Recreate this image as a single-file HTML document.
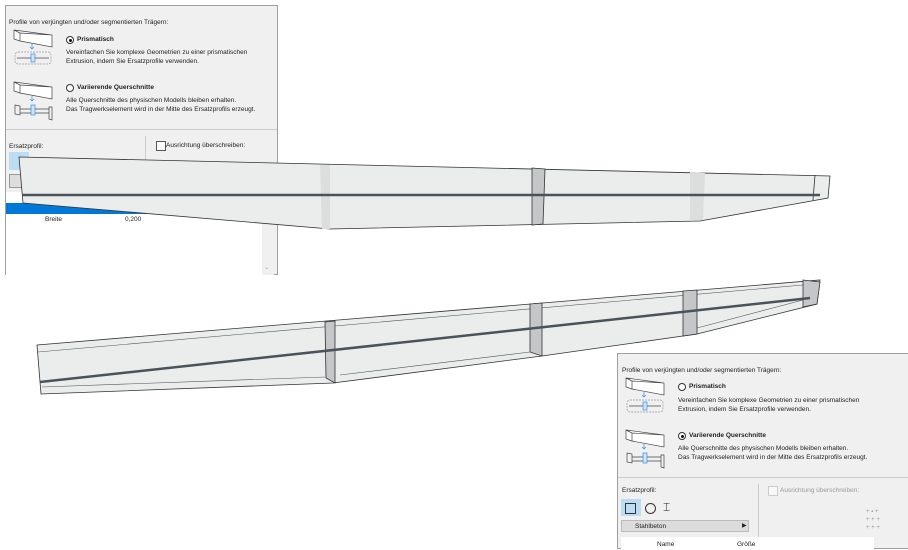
<!DOCTYPE html>
<html><head><meta charset="utf-8"><style>
body{margin:0;width:908px;height:548px;background:#fff;position:relative;overflow:hidden;font-family:"Liberation Sans",sans-serif;font-size:6.5px;color:#222}
.p{position:absolute;background:#f0f0f0;border:1px solid #a0a0a0;box-sizing:border-box}
.t{position:absolute;white-space:nowrap}
.b{font-weight:bold}
.rad{position:absolute;width:8px;height:8px;border:1px solid #333;border-radius:50%;background:#fff;box-sizing:border-box}
.rad.on::after{content:"";position:absolute;left:1.5px;top:1.5px;width:3px;height:3px;border-radius:50%;background:#111}
svg{position:absolute}
</style></head><body>

<!-- top-left panel -->
<div class="p" style="left:5px;top:5px;width:273px;height:270px">
  <div class="t" style="left:3px;top:13px">Profile von verjüngten und/oder segmentierten Trägern:</div>
  <div class="rad on" style="left:60px;top:30px"></div>
  <div class="t b" style="left:71px;top:30px">Prismatisch</div>
  <div class="t" style="left:60px;top:43px">Vereinfachen Sie komplexe Geometrien zu einer prismatischen</div>
  <div class="t" style="left:60px;top:52px">Extrusion, indem Sie Ersatzprofile verwenden.</div>
  <div class="rad" style="left:60px;top:78px"></div>
  <div class="t b" style="left:71px;top:78px">Variierende Querschnitte</div>
  <div class="t" style="left:60px;top:91px">Alle Querschnitte des physischen Modells bleiben erhalten.</div>
  <div class="t" style="left:60px;top:100px">Das Tragwerkselement wird in der Mitte des Ersatzprofils erzeugt.</div>
  <div style="position:absolute;left:0;right:0;top:123px;border-top:1px solid #ccc"></div>
  <div style="position:absolute;left:139px;top:130px;height:60px;border-left:1px solid #ccc"></div>
  <div class="t" style="left:3px;top:137px">Ersatzprofil:</div>
  <div style="position:absolute;left:150px;top:135px;width:8px;height:8px;border:1px solid #555;background:#fff"></div>
  <div class="t" style="left:160px;top:136px">Ausrichtung überschreiben:</div>
  <div style="position:absolute;left:3px;top:146px;width:20px;height:18px;background:#bcdcf4"></div>
  <div style="position:absolute;left:3px;top:168px;width:16px;height:12px;background:#ddd;border:1px solid #999"></div>
  <div style="position:absolute;left:0;top:186px;width:262px;height:83px;background:#fff"></div>
  <div style="position:absolute;left:0;top:197px;width:262px;height:11px;background:#0078d7"></div>
  <div class="t" style="left:39px;top:210px">Breite</div>
  <div class="t" style="left:119px;top:210px">0,200</div>
  <div style="position:absolute;left:256px;top:186px;width:12px;height:83px;background:#f0f0f0"></div>
  <div class="t" style="left:258px;top:257px;color:#999">⌄</div>
</div>
<svg style="left:12px;top:27px" width="44" height="95" viewBox="0 0 44 95" fill="none" stroke="#444" stroke-width=".7">
  <path d="M2 3 L40 8 L40 20 L8 14 L2 12 Z M2 3 L8 6 L8 14 M8 6 L40 8" fill="#fff"/>
  <path d="M20 17 V22 M18 20 L20 22 L22 20" stroke="#3a8ee6"/>
  <rect x="3" y="25" width="36" height="12" rx="3" stroke="#999" stroke-dasharray="2 1"/>
  <path d="M5 31 H37"/><rect x="19" y="27" width="4" height="8" stroke="#3a8ee6" fill="#cfe4f9"/>
  <path d="M2 55 L40 60 L40 72 L8 66 L2 64 Z M2 55 L8 58 L8 66 M8 58 L40 60" fill="#fff"/>
  <path d="M20 69 V74 M18 72 L20 74 L22 72" stroke="#3a8ee6"/>
  <path d="M3 78 L8 79 L8 88 L3 87 Z M37 80 L40 80 L40 93 L37 92 Z M8 82 H37 M8 86 H37"/>
  <rect x="19" y="78" width="4" height="10" stroke="#3a8ee6" fill="#cfe4f9"/>
</svg>

<!-- beams -->
<svg style="left:0;top:0" width="908" height="548" viewBox="0 0 908 548" stroke="#333" stroke-width=".8">
  <polygon points="19,157 830,176 828,198 700,221 330,229 23,203" fill="#ebecec"/>
  <polygon points="320,165 330,165 330,229 322,229" fill="#dcdddd" stroke="none"/>
  <polygon points="690,172 705,173 703,220 690,221" fill="#dcdddd" stroke="none"/>
  <polygon points="532,168 545,169 543,224 532,225" fill="#c4c6c8"/>
  <path d="M815,175 L813,200" fill="none"/>
  <path d="M22,195 L820,195" stroke="#4a525a" stroke-width="2.5"/>
  <polygon points="37,345 820,280 817,304 697,334 542,356 333,383 41,394" fill="#ebecec"/>
  <path d="M38,352 L803,285 M42,387 L325,377 M340,375 L530,352 M697,328 L803,300" fill="none" stroke="#555" stroke-width=".6"/>
  <polygon points="325,322 335,321 335,383 326,378" fill="#c4c6c8"/>
  <polygon points="530,304 542,303 542,356 530,352" fill="#c4c6c8"/>
  <polygon points="683,291 697,290 697,334 683,336" fill="#c4c6c8"/>
  <polygon points="803,280 820,282 817,304 803,307" fill="#c4c6c8"/>
  <path d="M40,382 L810,298" stroke="#4a525a" stroke-width="2.5"/>
</svg>

<!-- bottom-right panel -->
<div class="p" style="left:617px;top:353px;width:292px;height:196px">
  <div class="t" style="left:4px;top:13px">Profile von verjüngten und/oder segmentierten Trägern:</div>
  <div class="rad" style="left:60px;top:29px"></div>
  <div class="t b" style="left:71px;top:29px">Prismatisch</div>
  <div class="t" style="left:60px;top:43px">Vereinfachen Sie komplexe Geometrien zu einer prismatischen</div>
  <div class="t" style="left:60px;top:52px">Extrusion, indem Sie Ersatzprofile verwenden.</div>
  <div class="rad on" style="left:60px;top:78px"></div>
  <div class="t b" style="left:71px;top:78px">Variierende Querschnitte</div>
  <div class="t" style="left:60px;top:91px">Alle Querschnitte des physischen Modells bleiben erhalten.</div>
  <div class="t" style="left:60px;top:100px">Das Tragwerkselement wird in der Mitte des Ersatzprofils erzeugt.</div>
  <div style="position:absolute;left:0;right:0;top:123px;border-top:1px solid #ccc"></div>
  <div style="position:absolute;left:140px;top:130px;height:60px;border-left:1px solid #ccc"></div>
  <div class="t" style="left:4px;top:133px">Ersatzprofil:</div>
  <div style="position:absolute;left:150px;top:132px;width:8px;height:8px;border:1px solid #ccc;background:#f8f8f8"></div>
  <div class="t" style="left:162px;top:133px;color:#999">Ausrichtung überschreiben:</div>
  <div style="position:absolute;left:3px;top:145px;width:20px;height:17px;background:#bcdcf4"></div>
  <div style="position:absolute;left:7px;top:149px;width:9px;height:9px;border:1px solid #333"></div>
  <div style="position:absolute;left:27px;top:149px;width:9px;height:9px;border:1px solid #333;border-radius:50%"></div>
  <div class="t" style="left:45px;top:146px;font-size:12px">⌶</div>
  <div style="position:absolute;left:3px;top:166px;width:128px;height:12px;background:#dcdcdc;border:1px solid #bbb;box-sizing:border-box"></div>
  <div class="t" style="left:17px;top:169px">Stahlbeton</div>
  <div class="t" style="left:124px;top:168px;font-size:6px">▶</div>
  <div class="t" style="left:248px;top:154px;color:#999;font-size:6px;line-height:8px">+ ▪ +<br>+ + +<br>+ + +</div>
  <div style="position:absolute;left:3px;top:183px;width:253px;height:13px;background:#fff"></div>
  <div class="t" style="left:39px;top:187px">Name</div>
  <div class="t" style="left:119px;top:187px">Größe</div>
</div>
<svg style="left:624px;top:375px" width="44" height="95" viewBox="0 0 44 95" fill="none" stroke="#444" stroke-width=".7">
  <path d="M2 3 L40 8 L40 20 L8 14 L2 12 Z M2 3 L8 6 L8 14 M8 6 L40 8" fill="#fff"/>
  <path d="M20 17 V22 M18 20 L20 22 L22 20" stroke="#3a8ee6"/>
  <rect x="3" y="25" width="36" height="12" rx="3" stroke="#999" stroke-dasharray="2 1"/>
  <path d="M5 31 H37"/><rect x="19" y="27" width="4" height="8" stroke="#3a8ee6" fill="#cfe4f9"/>
  <path d="M2 55 L40 60 L40 72 L8 66 L2 64 Z M2 55 L8 58 L8 66 M8 58 L40 60" fill="#fff"/>
  <path d="M20 69 V74 M18 72 L20 74 L22 72" stroke="#3a8ee6"/>
  <path d="M3 78 L8 79 L8 88 L3 87 Z M37 80 L40 80 L40 93 L37 92 Z M8 82 H37 M8 86 H37"/>
  <rect x="19" y="78" width="4" height="10" stroke="#3a8ee6" fill="#cfe4f9"/>
</svg>
</body></html>
